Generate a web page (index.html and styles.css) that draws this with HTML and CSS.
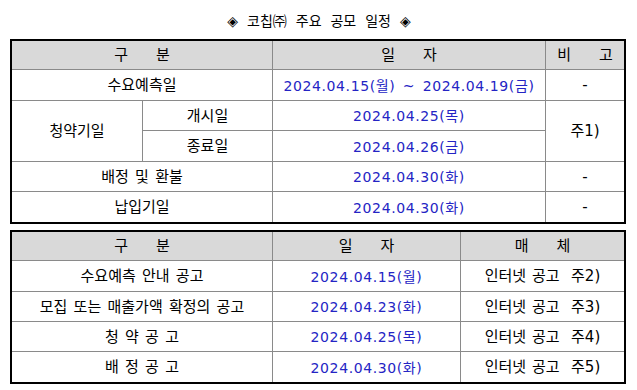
FILE: index.html
```html
<!DOCTYPE html>
<html lang="ko">
<head>
<meta charset="utf-8">
<title>코칩㈜ 주요 공모 일정</title>
<link rel="stylesheet" href="styles.css">
</head>
<body>
<div class="title">◈ 코칩㈜ 주요 공모 일정 ◈</div>

<div class="grid grid-one">
  <div class="cell head c1 span2"><span>구</span><span>분</span></div>
  <div class="cell head"><span>일</span><span>자</span></div>
  <div class="cell head last"><span>비</span><span>고</span></div>

  <div class="cell span2 r1">수요예측일</div>
  <div class="cell date r1">2024.04.15(월) ~ 2024.04.19(금)</div>
  <div class="cell last r1">-</div>

  <div class="cell rowspan2 r2">청약기일</div>
  <div class="cell r2">개시일</div>
  <div class="cell date r2">2024.04.25(목)</div>
  <div class="cell last rowspan2 r2">주1)</div>
  <div class="cell r3">종료일</div>
  <div class="cell date r3">2024.04.26(금)</div>

  <div class="cell span2 r4">배정 및 환불</div>
  <div class="cell date r4">2024.04.30(화)</div>
  <div class="cell last r4">-</div>

  <div class="cell span2 bottom">납입기일</div>
  <div class="cell date bottom">2024.04.30(화)</div>
  <div class="cell last bottom">-</div>
</div>

<div class="grid grid-two">
  <div class="cell head"><span>구</span><span>분</span></div>
  <div class="cell head"><span>일</span><span>자</span></div>
  <div class="cell head last"><span>매</span><span>체</span></div>

  <div class="cell b1">수요예측 안내 공고</div>
  <div class="cell date b1">2024.04.15(월)</div>
  <div class="cell last b1 pre">인터넷 공고  주2)</div>

  <div class="cell b2">모집 또는 매출가액 확정의 공고</div>
  <div class="cell date b2">2024.04.23(화)</div>
  <div class="cell last b2 pre">인터넷 공고  주3)</div>

  <div class="cell b3">청 약 공 고</div>
  <div class="cell date b3">2024.04.25(목)</div>
  <div class="cell last b3 pre">인터넷 공고  주4)</div>

  <div class="cell bottom">배 정 공 고</div>
  <div class="cell date bottom">2024.04.30(화)</div>
  <div class="cell last bottom pre">인터넷 공고  주5)</div>
</div>
</body>
</html>
```

FILE: styles.css
```css
html, body {
  margin: 0;
  padding: 0;
  background: #ffffff;
}

body {
  width: 637px;
  height: 390px;
  font-family: "DejaVu Sans", "Noto Sans CJK KR", sans-serif;
  font-size: 15px;
  color: #000000;
  overflow: hidden;
}

.title {
  height: 39px;
  display: flex;
  align-items: center;
  justify-content: center;
  font-size: 14px;
  word-spacing: 4.5px;
  padding-left: 1px;
  box-sizing: border-box;
}

.grid {
  display: grid;
  margin-left: 10px;
  width: 616px;
  box-sizing: border-box;
  border: 2px solid #000000;
}

.grid-one {
  grid-template-columns: 131px 130px 273px 78px;
  grid-template-rows: 29px 31px 30px 31px 30px 30px;
}

.grid-two {
  margin-top: 6px;
  grid-template-columns: 261px 188px 163px;
  grid-template-rows: 29px 31px 30px 30px 30px;
}

.cell {
  display: flex;
  align-items: center;
  justify-content: center;
  border-right: 1px solid #8a8a8a;
  border-bottom: 1px solid #8a8a8a;
  line-height: 1;
  white-space: nowrap;
  word-spacing: 1.5px;
  padding-top: 1px;
  box-sizing: border-box;
}

.cell.last {
  border-right: none;
}

.cell.bottom {
  border-bottom: none;
}

.head {
  background: #d9d9d9;
  gap: 28px;
}

.span2 {
  grid-column: span 2;
}

.rowspan2 {
  grid-row: span 2;
}

.date {
  font-size: 14px;
  color: #2424c4;
  letter-spacing: 0.6px;
  word-spacing: 2.5px;
}

.pre {
  white-space: pre;
  word-spacing: 1px;
}
```
